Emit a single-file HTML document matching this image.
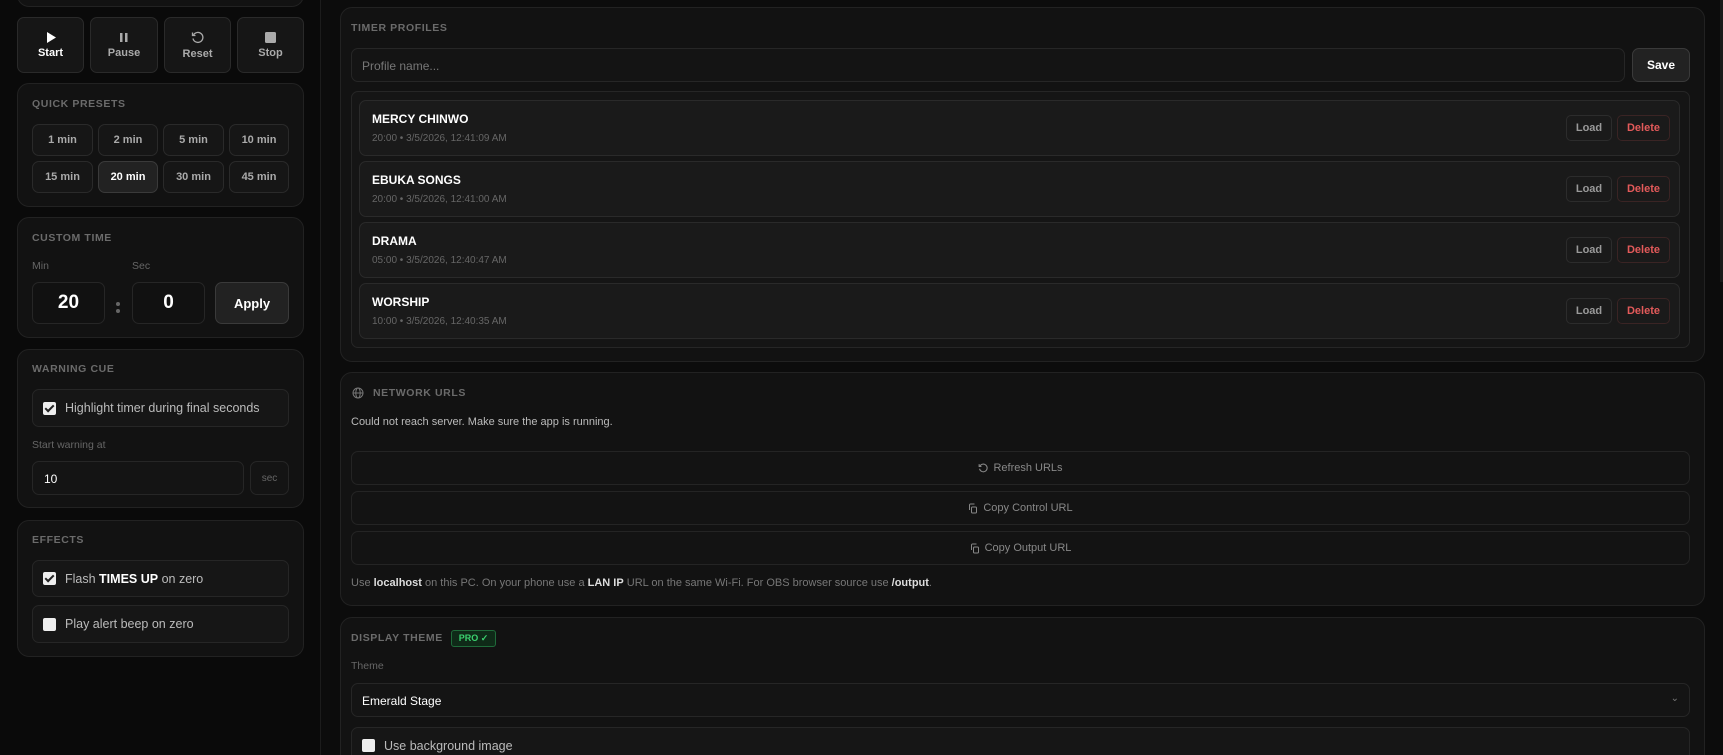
<!DOCTYPE html>
<html><head><meta charset="utf-8"><style>
*{box-sizing:border-box;margin:0;padding:0}
html{width:1723px;height:755px;overflow:hidden}
body{width:1723px;height:755px;overflow:hidden;background:#0c0c0c;font-family:"Liberation Sans",sans-serif;color:#ddd;position:relative}
.a{position:absolute}
.side{left:0;top:0;width:321px;height:755px;background:#0a0a0a;border-right:1px solid #1c1c1c}
.card{position:absolute;background:#121212;border:1px solid #222;border-radius:12px}
.ttl{position:absolute;font-size:10.5px;font-weight:bold;letter-spacing:.6px;color:#6b6b6b;text-transform:uppercase}
.btn{position:absolute;background:#161616;border:1px solid #2a2a2a;border-radius:7px;color:#aaa;font-weight:bold;font-size:11px;display:flex;align-items:center;justify-content:center}
.box{position:absolute;background:#141414;border:1px solid #262626;border-radius:7px}
.lbl{position:absolute;font-size:10.5px;color:#666}
.cb{display:inline-block;width:13px;height:13px;border-radius:2px;background:#eee;vertical-align:middle;position:relative;flex:none}
.cb.on::after{content:"";position:absolute;left:4px;top:1px;width:3px;height:7px;border:solid #222;border-width:0 2px 2px 0;transform:rotate(45deg)}
.row{position:absolute;background:#161616;border:1px solid #262626;border-radius:7px;font-size:12.5px;color:#bbb;display:flex;align-items:center;padding-left:10px;gap:9px}
.item{position:absolute;left:359px;width:1321px;height:56px;background:#1a1a1a;border:1px solid #2a2a2a;border-radius:7px}
.item .n{position:absolute;left:12px;top:11px;font-size:12px;font-weight:bold;color:#fff}
.item .d{position:absolute;left:12px;top:32px;font-size:10px;color:#666}
.item .l{position:absolute;left:1206px;top:14px;width:46px;height:26px;border:1px solid #2c2c2c;border-radius:5px;font-size:11px;font-weight:bold;color:#999;display:flex;align-items:center;justify-content:center}
.item .x{position:absolute;left:1257px;top:14px;width:53px;height:26px;border:1px solid #3a2424;border-radius:5px;font-size:11px;font-weight:bold;color:#e35a5a;display:flex;align-items:center;justify-content:center}
.wb{position:absolute;left:351px;width:1339px;height:34px;background:#131313;border:1px solid #242424;border-radius:7px;font-size:11px;color:#888;display:flex;align-items:center;justify-content:center;gap:5px}
</style></head><body>
<div class="a side"></div>
<div class="card" style="left:17px;top:-20px;width:287px;height:27px"></div>

<div class="btn" style="left:17px;top:17px;width:67px;height:56px;flex-direction:column;color:#fff;gap:4px"><svg width="10" height="11"><path d="M1 0L10 5.5L1 11Z" fill="#fff"/></svg>Start</div>
<div class="btn" style="left:90px;top:17px;width:68px;height:56px;flex-direction:column;gap:4px"><svg width="10" height="11"><rect x="1" y="1" width="2.5" height="9" fill="#aaa"/><rect x="6" y="1" width="2.5" height="9" fill="#aaa"/></svg>Pause</div>
<div class="btn" style="left:164px;top:17px;width:67px;height:56px;flex-direction:column;gap:4px"><svg width="13" height="13" viewBox="0 0 13 13"><path d="M2.5 4A5 5 0 1 1 2 7.5" fill="none" stroke="#aaa" stroke-width="1.3"/><path d="M1.5 1.5V4.5H4.5" fill="none" stroke="#aaa" stroke-width="1.3"/></svg>Reset</div>
<div class="btn" style="left:237px;top:17px;width:67px;height:56px;flex-direction:column;gap:4px"><svg width="11" height="11"><rect x="0" y="0" width="11" height="11" rx="1.5" fill="#aaa"/></svg>Stop</div>

<div class="card" style="left:17px;top:83px;width:287px;height:124px"></div>
<div class="ttl" style="left:32px;top:98px">Quick presets</div>
<div class="btn" style="left:32px;top:124px;width:61px;height:32px">1 min</div>
<div class="btn" style="left:98px;top:124px;width:60px;height:32px">2 min</div>
<div class="btn" style="left:163px;top:124px;width:61px;height:32px">5 min</div>
<div class="btn" style="left:229px;top:124px;width:60px;height:32px">10 min</div>
<div class="btn" style="left:32px;top:161px;width:61px;height:32px">15 min</div>
<div class="btn" style="left:98px;top:161px;width:60px;height:32px;background:#222;border-color:#3a3a3a;color:#fff">20 min</div>
<div class="btn" style="left:163px;top:161px;width:61px;height:32px">30 min</div>
<div class="btn" style="left:229px;top:161px;width:60px;height:32px">45 min</div>

<div class="card" style="left:17px;top:217px;width:287px;height:121px"></div>
<div class="ttl" style="left:32px;top:232px">Custom time</div>
<div class="lbl" style="left:32px;top:260px">Min</div>
<div class="lbl" style="left:132px;top:260px">Sec</div>
<div class="box" style="left:32px;top:282px;width:73px;height:42px;background:#111;color:#fff;font-size:19px;font-weight:bold;display:flex;align-items:center;justify-content:center">20</div>
<div class="a" style="left:116px;top:302px;width:4px;height:4px;border-radius:2px;background:#666"></div>
<div class="a" style="left:116px;top:309px;width:4px;height:4px;border-radius:2px;background:#666"></div>
<div class="box" style="left:132px;top:282px;width:73px;height:42px;background:#111;color:#fff;font-size:19px;font-weight:bold;display:flex;align-items:center;justify-content:center">0</div>
<div class="btn" style="left:215px;top:282px;width:74px;height:42px;background:#222;border-color:#3a3a3a;color:#fff;font-size:13px">Apply</div>

<div class="card" style="left:17px;top:349px;width:287px;height:159px"></div>
<div class="ttl" style="left:32px;top:363px">Warning cue</div>
<div class="row" style="left:32px;top:389px;width:257px;height:38px"><span class="cb on"></span>Highlight timer during final seconds</div>
<div class="lbl" style="left:32px;top:439px">Start warning at</div>
<div class="box" style="left:32px;top:461px;width:212px;height:34px;font-size:12px;color:#fff;padding:10px 11px">10</div>
<div class="box" style="left:250px;top:461px;width:39px;height:34px;font-size:10px;color:#666;display:flex;align-items:center;justify-content:center">sec</div>

<div class="card" style="left:17px;top:520px;width:287px;height:137px"></div>
<div class="ttl" style="left:32px;top:534px">Effects</div>
<div class="row" style="left:32px;top:560px;width:257px;height:37px"><span class="cb on"></span><span>Flash <b style="color:#fff">TIMES UP</b> on zero</span></div>
<div class="row" style="left:32px;top:605px;width:257px;height:38px"><span class="cb"></span>Play alert beep on zero</div>

<div class="a" style="left:1720px;top:0;width:3px;height:282px;background:#1a1a1a"></div>

<div class="card" style="left:340px;top:7px;width:1365px;height:355px"></div>
<div class="ttl" style="left:351px;top:22px">Timer profiles</div>
<div class="box" style="left:351px;top:48px;width:1274px;height:34px;font-size:12px;color:#777;padding:10px 10px">Profile name...</div>
<div class="btn" style="left:1632px;top:48px;width:58px;height:34px;background:#222;border-color:#3a3a3a;color:#fff;font-size:12px">Save</div>
<div class="box" style="left:351px;top:91px;width:1339px;height:257px;background:#151515"></div>
<div class="item" style="top:100px"><div class="n">MERCY CHINWO</div><div class="d">20:00 • 3/5/2026, 12:41:09 AM</div><div class="l">Load</div><div class="x">Delete</div></div>
<div class="item" style="top:161px"><div class="n">EBUKA SONGS</div><div class="d">20:00 • 3/5/2026, 12:41:00 AM</div><div class="l">Load</div><div class="x">Delete</div></div>
<div class="item" style="top:222px"><div class="n">DRAMA</div><div class="d">05:00 • 3/5/2026, 12:40:47 AM</div><div class="l">Load</div><div class="x">Delete</div></div>
<div class="item" style="top:283px"><div class="n">WORSHIP</div><div class="d">10:00 • 3/5/2026, 12:40:35 AM</div><div class="l">Load</div><div class="x">Delete</div></div>

<div class="card" style="left:340px;top:372px;width:1365px;height:234px"></div>
<svg class="a" style="left:352px;top:387px" width="12" height="12" viewBox="0 0 12 12" fill="none" stroke="#777" stroke-width="1"><circle cx="6" cy="6" r="5"/><ellipse cx="6" cy="6" rx="2.2" ry="5"/><path d="M1 6H11"/></svg>
<div class="ttl" style="left:373px;top:387px">Network URLs</div>
<div class="a" style="left:351px;top:416px;font-size:11px;color:#bbb">Could not reach server. Make sure the app is running.</div>
<div class="wb" style="top:451px"><svg width="10" height="10" viewBox="0 0 13 13"><path d="M2.5 4A5 5 0 1 1 2 7.5" fill="none" stroke="#888" stroke-width="1.4"/><path d="M1.5 1.5V4.5H4.5" fill="none" stroke="#888" stroke-width="1.4"/></svg>Refresh URLs</div>
<div class="wb" style="top:491px"><svg width="10" height="11" viewBox="0 0 10 11" fill="none" stroke="#888"><rect x="3.5" y="4" width="5" height="6" rx="1"/><path d="M1.5 7V2a1 1 0 0 1 1-1h4"/></svg>Copy Control URL</div>
<div class="wb" style="top:531px"><svg width="10" height="11" viewBox="0 0 10 11" fill="none" stroke="#888"><rect x="3.5" y="4" width="5" height="6" rx="1"/><path d="M1.5 7V2a1 1 0 0 1 1-1h4"/></svg>Copy Output URL</div>
<div class="a" style="left:351px;top:577px;font-size:11px;color:#777">Use <b style="color:#ddd">localhost</b> on this PC. On your phone use a <b style="color:#ddd">LAN IP</b> URL on the same Wi-Fi. For OBS browser source use <b style="color:#ddd">/output</b>.</div>

<div class="card" style="left:340px;top:617px;width:1365px;height:150px"></div>
<div class="ttl" style="left:351px;top:632px">Display theme</div>
<div class="a" style="left:451px;top:630px;width:45px;height:17px;border:1px solid #1f6b3a;border-radius:3px;background:#0f2a18;color:#3bd16f;font-size:9px;font-weight:bold;display:flex;align-items:center;justify-content:center">PRO ✓</div>
<div class="lbl" style="left:351px;top:660px">Theme</div>
<div class="box" style="left:351px;top:683px;width:1339px;height:34px;font-size:12px;color:#fff;padding:10px 10px">Emerald Stage<span style="position:absolute;right:10px;top:9px;color:#777;font-size:10px">⌄</span></div>
<div class="row" style="left:351px;top:727px;width:1339px;height:40px;font-size:12.5px;align-items:flex-start;padding-top:11px"><span class="cb"></span>Use background image</div>
</body></html>
